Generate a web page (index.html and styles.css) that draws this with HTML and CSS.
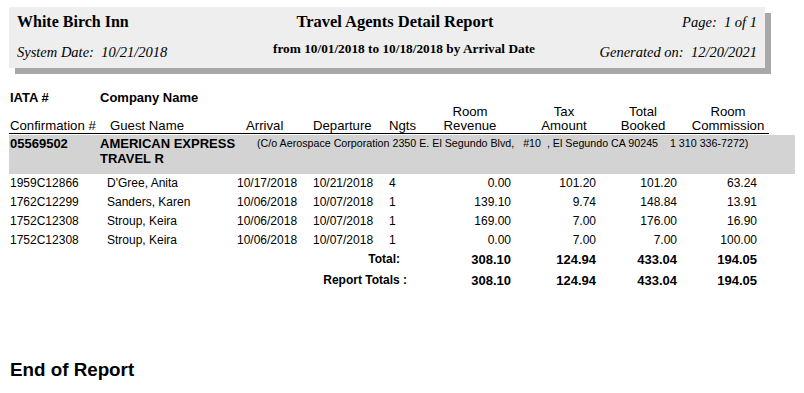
FILE: index.html
```html
<!DOCTYPE html>
<html lang="en">
<head>
<meta charset="utf-8">
<title>Travel Agents Detail Report</title>
<link rel="stylesheet" href="styles.css">
</head>
<body>
<div class="page">
  <header class="report-head">
    <div class="hotel">White Birch Inn</div>
    <div class="title">Travel Agents Detail Report</div>
    <div class="pageno">Page:&nbsp; 1 of 1</div>
    <div class="sysdate">System Date:&nbsp; 10/21/2018</div>
    <div class="subtitle">from 10/01/2018 to 10/18/2018 by Arrival Date</div>
    <div class="generated">Generated on:&nbsp; 12/20/2021</div>
  </header>

  <div class="colhead1">
    <div>IATA #</div>
    <div>Company Name</div>
  </div>
  <div class="colhead2">
    <div>Confirmation #</div>
    <div>Guest Name</div>
    <div class="pad-arr">Arrival</div>
    <div>Departure</div>
    <div>Ngts</div>
    <div class="ctr">Room<br>Revenue</div>
    <div class="ctr">Tax<br>Amount</div>
    <div class="ctr">Total<br>Booked</div>
    <div class="ctr pad-com">Room<br>Commission</div>
  </div>

  <div class="agent">
    <div class="iata">05569502</div>
    <div class="company">AMERICAN EXPRESS TRAVEL R</div>
    <div class="address">(C/o Aerospace Corporation 2350 E. El Segundo Blvd,&nbsp;&nbsp; #10&nbsp; , El Segundo CA 90245&nbsp;&nbsp;&nbsp; 1 310 336-7272)</div>
  </div>

  <div class="rows">
    <div class="row">
      <div>1959C12866</div><div>D'Gree, Anita</div><div>10/17/2018</div><div>10/21/2018</div><div>4</div>
      <div class="num">0.00</div><div class="num">101.20</div><div class="num">101.20</div><div class="num">63.24</div>
    </div>
    <div class="row">
      <div>1762C12299</div><div>Sanders, Karen</div><div>10/06/2018</div><div>10/07/2018</div><div>1</div>
      <div class="num">139.10</div><div class="num">9.74</div><div class="num">148.84</div><div class="num">13.91</div>
    </div>
    <div class="row">
      <div>1752C12308</div><div>Stroup, Keira</div><div>10/06/2018</div><div>10/07/2018</div><div>1</div>
      <div class="num">169.00</div><div class="num">7.00</div><div class="num">176.00</div><div class="num">16.90</div>
    </div>
    <div class="row">
      <div>1752C12308</div><div>Stroup, Keira</div><div>10/06/2018</div><div>10/07/2018</div><div>1</div>
      <div class="num">0.00</div><div class="num">7.00</div><div class="num">7.00</div><div class="num">100.00</div>
    </div>
    <div class="row total">
      <div class="label label-total">Total:</div>
      <div class="num">308.10</div><div class="num">124.94</div><div class="num">433.04</div><div class="num">194.05</div>
    </div>
    <div class="row total grand">
      <div class="label label-grand">Report Totals :</div>
      <div class="num">308.10</div><div class="num">124.94</div><div class="num">433.04</div><div class="num">194.05</div>
    </div>
  </div>

  <div class="end">End of Report</div>
</div>
</body>
</html>
```

FILE: styles.css
```css
* { box-sizing: border-box; }
html, body { margin: 0; padding: 0; background: #fff; color: #000; }
body { font-family: "Liberation Sans", Arial, sans-serif; }
.page { width: 804px; }

.report-head {
  margin: 7px 0 0 9px;
  width: 756px;
  height: 61px;
  background: #eeeeee;
  box-shadow: 6px 6px 0 #a8a8a8;
  padding: 5px 8px 6px 8px;
  display: grid;
  grid-template-columns: 245px 284px 1fr;
  grid-template-rows: 20px 20px;
  row-gap: 10px;
  font-family: "Liberation Serif", "Times New Roman", serif;
  line-height: 20px;
}
.hotel { font-weight: bold; font-size: 16px; }
.title { font-weight: bold; font-size: 16.5px; text-align: center; padding-right: 18px; }
.pageno, .generated { font-style: italic; font-size: 14.5px; text-align: right; }
.sysdate { font-style: italic; font-size: 14.5px; }
.subtitle { font-weight: bold; font-size: 13.3px; text-align: center; line-height: 14px; align-self: start; white-space: nowrap; }

.colhead1 {
  margin-top: 23px;
  padding-left: 10px;
  display: grid;
  grid-template-columns: 90px auto;
  font-weight: bold;
  font-size: 13px;
  line-height: 14px;
}
.colhead2 {
  margin-left: 9px;
  width: 760px;
  padding-left: 1px;
  display: grid;
  grid-template-columns: 100px 136px 67px 76px 41px 80px 108px 50px 101px;
  align-items: end;
  font-size: 13.2px;
  line-height: 14px;
  border-bottom: 1px solid #000;
}
.colhead2 .ctr { text-align: center; white-space: nowrap; }
.colhead2 .pad-com { padding-left: 19px; }

.agent {
  margin: 1px 0 0 9px;
  width: 786px;
  height: 39px;
  background: #d3d3d3;
  padding: 1px 0 0 1px;
  display: grid;
  grid-template-columns: 90px 157px 1fr;
  line-height: 15px;
}
.iata, .company { font-weight: bold; font-size: 13px; }
.address { font-size: 10.7px; white-space: nowrap; }

.rows { padding-left: 10px; }
.row {
  display: grid;
  grid-template-columns: 97px 130px 76px 76px 40px 82px 85px 81px 80px;
  font-size: 12px;
  line-height: 19px;
  height: 19px;
}
.row .num { text-align: right; }
.row.total { font-weight: bold; }
.row.total .num { font-size: 13px; }
.row.grand { margin-top: 2px; }
.label { grid-column: 1 / 6; text-align: right; font-size: 12px; }
.label-total { padding-right: 29px; }
.label-grand { padding-right: 22px; }

.end {
  margin-top: 69px;
  padding-left: 10px;
  font-weight: bold;
  font-size: 18.8px;
  line-height: 22px;
}
```
